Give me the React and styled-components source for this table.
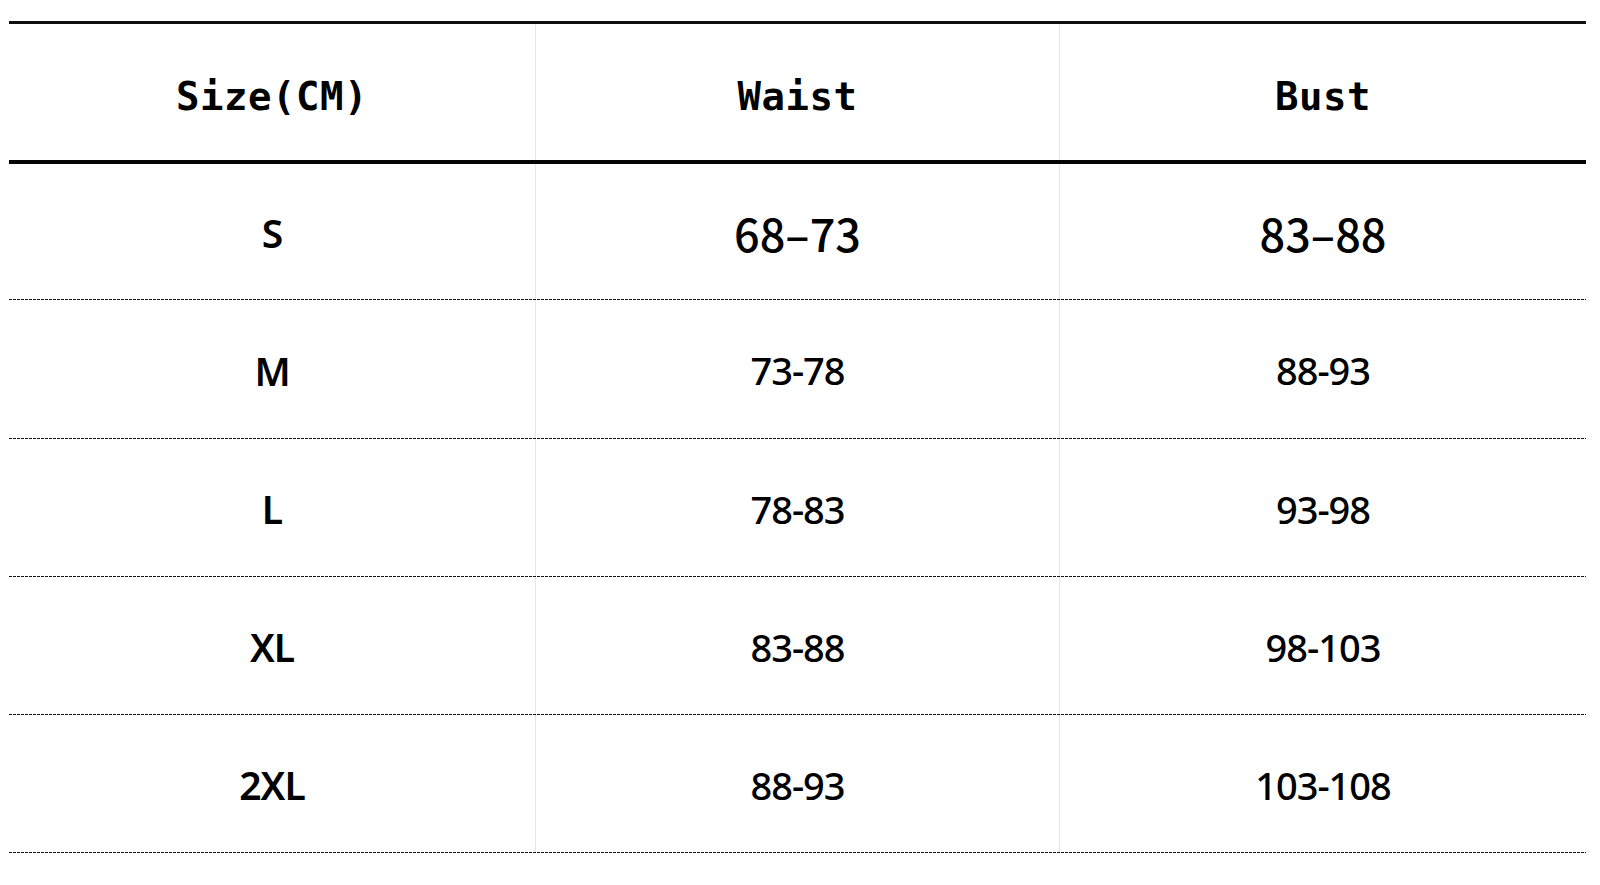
import React from 'react'
import styled, { createGlobalStyle } from 'styled-components'

const GlobalStyle = createGlobalStyle`
  html, body {
    margin: 0;
    background: #fff;
  }
`

const Page = styled.div`
  padding: 21px 0 0 9px;
  width: 1600px;
  height: 885px;
  box-sizing: border-box;
  overflow: hidden;
`

const Table = styled.div`
  width: 1577px;
  border-top: 3px solid #111;
`

const Row = styled.div`
  display: grid;
  grid-template-columns: 526px 524px 527px;
  height: ${p => p.$height}px;
  box-sizing: border-box;
`

const HeadRow = styled(Row)`
  border-bottom: 4px solid #050505;
`

const BodyRow = styled(Row)`
  background-image: linear-gradient(to right, #111 65%, transparent 0);
  background-size: 4px 1px;
  background-repeat: repeat-x;
  background-position: left bottom;
  padding-bottom: 1px;
`

const Cell = styled.div`
  display: flex;
  align-items: center;
  justify-content: center;
  color: #000;
  padding-top: ${p => p.$shift || 0}px;
  &:not(:first-child) {
    border-left: 1px solid #e6e6e6;
  }
`

const HeadText = styled.span`
  font-family: "DejaVu Sans Mono", "Liberation Mono", monospace;
  font-weight: bold;
  font-size: 39px;
  letter-spacing: 0.5px;
`

const SizeText = styled.span`
  font-family: "Noto Sans", "Open Sans", sans-serif;
  font-weight: 600;
  font-size: 39px;
  letter-spacing: -1px;
`

const ValueText = styled.span`
  font-family: "Noto Sans", "Open Sans", sans-serif;
  font-weight: 500;
  font-size: 38px;
  letter-spacing: -1px;
`

const BigValue = styled.span`
  font-family: "Noto Sans CJK SC", "Noto Sans", sans-serif;
  font-weight: 500;
  font-size: 45px;
`

const rows = [
  { size: 'S', waist: '68–73', bust: '83–88', big: true, h: 136 },
  { size: 'M', waist: '73-78', bust: '88-93', h: 139 },
  { size: 'L', waist: '78-83', bust: '93-98', h: 138 },
  { size: 'XL', waist: '83-88', bust: '98-103', h: 138 },
  { size: '2XL', waist: '88-93', bust: '103-108', h: 138 },
]

const App = () => {
  return (
    <Page>
      <GlobalStyle />
      <Table>
        <HeadRow $height={140}>
          <Cell $shift={8}><HeadText>Size(CM)</HeadText></Cell>
          <Cell $shift={8}><HeadText>Waist</HeadText></Cell>
          <Cell $shift={8}><HeadText>Bust</HeadText></Cell>
        </HeadRow>
        {rows.map(r => (
          <BodyRow key={r.size} $height={r.h}>
            <Cell $shift={2}><SizeText>{r.size}</SizeText></Cell>
            {r.big ? (
              <>
                <Cell $shift={2}><BigValue>{r.waist}</BigValue></Cell>
                <Cell $shift={2}><BigValue>{r.bust}</BigValue></Cell>
              </>
            ) : (
              <>
                <Cell $shift={2}><ValueText>{r.waist}</ValueText></Cell>
                <Cell $shift={2}><ValueText>{r.bust}</ValueText></Cell>
              </>
            )}
          </BodyRow>
        ))}
      </Table>
    </Page>
  )
}

export default App
